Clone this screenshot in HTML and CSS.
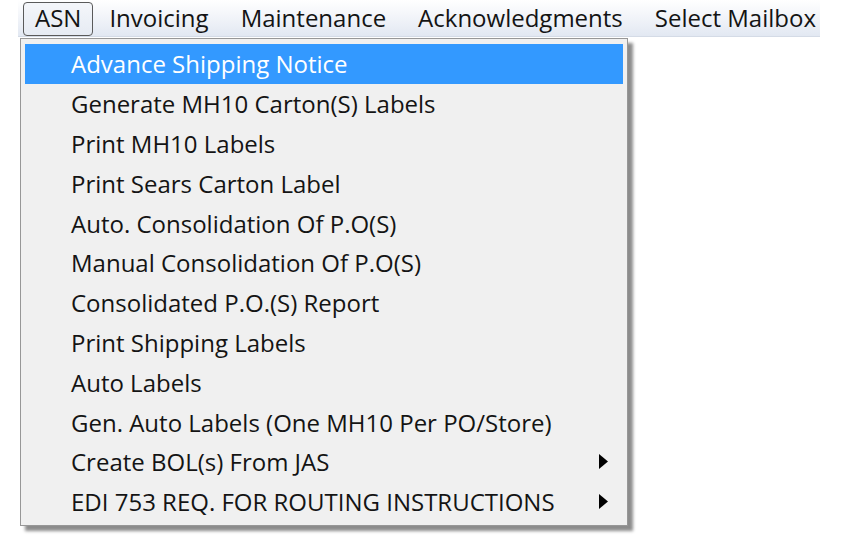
FILE: index.html
```html
<!DOCTYPE html>
<html>
<head>
<meta charset="utf-8">
<link rel="stylesheet" href="styles.css">
</head>
<body>
<div class="menubar">
  <div class="mb-item active">ASN</div>
  <div class="mb-item">Invoicing</div>
  <div class="mb-item">Maintenance</div>
  <div class="mb-item">Acknowledgments</div>
  <div class="mb-item">Select Mailbox</div>
</div>
<div class="menu">
  <div class="mi hl">Advance Shipping Notice</div>
  <div class="mi">Generate MH10 Carton(S) Labels</div>
  <div class="mi">Print MH10 Labels</div>
  <div class="mi">Print Sears Carton Label</div>
  <div class="mi">Auto. Consolidation Of P.O(S)</div>
  <div class="mi">Manual Consolidation Of P.O(S)</div>
  <div class="mi">Consolidated P.O.(S) Report</div>
  <div class="mi">Print Shipping Labels</div>
  <div class="mi">Auto Labels</div>
  <div class="mi">Gen. Auto Labels (One MH10 Per PO/Store)</div>
  <div class="mi sub"><span>Create BOL(s) From JAS</span><svg class="arrow" width="9" height="15" viewBox="0 0 9 15"><path d="M0 0 L9 7.5 L0 15 Z" fill="#000"/></svg></div>
  <div class="mi sub"><span>EDI 753 REQ. FOR ROUTING INSTRUCTIONS</span><svg class="arrow" width="9" height="15" viewBox="0 0 9 15"><path d="M0 0 L9 7.5 L0 15 Z" fill="#000"/></svg></div>
</div>
</body>
</html>
```
FILE: styles.css
```css
html, body {
  margin: 0;
  padding: 0;
  background: #ffffff;
}
body {
  font-family: "Open Sans", "Noto Sans", sans-serif;
  color: #141414;
  position: relative;
  width: 841px;
  height: 547px;
  overflow: hidden;
}
.menubar {
  margin-left: 18px;
  width: 802px;
  height: 37px;
  box-sizing: border-box;
  display: flex;
  align-items: stretch;
  padding-top: 2px;
  padding-left: 5px;
  background: linear-gradient(#ffffff 0%, #f4f6fa 40%, #e2e8f2 100%);
  border-bottom: 1px solid #d4dbe6;
  font-size: 24px;
}
.mb-item {
  display: flex;
  align-items: center;
  padding: 0 16px 3px 16px;
  box-sizing: border-box;
  white-space: nowrap;
}
.mb-item.active {
  border: 1px solid #5a5a5a;
  border-radius: 4px;
  padding: 0 11px 3px 11px;
  background: linear-gradient(#f4f6fa, #e6ebf3);
}
.menu {
  position: absolute;
  left: 20px;
  top: 38px;
  width: 608px;
  box-sizing: border-box;
  background: #f0f0f0;
  border: 1px solid #979797;
  padding: 5px 4px 3px 4px;
  box-shadow: 5px 5px 3px rgba(0, 0, 0, 0.45);
  font-size: 24px;
}
.mi {
  height: 39.8px;
  box-sizing: border-box;
  display: flex;
  align-items: center;
  padding-left: 46px;
  padding-right: 15px;
  white-space: nowrap;
}
.mi.hl {
  background: #3399ff;
  color: #ffffff;
}
.mi.sub {
  justify-content: space-between;
}
.arrow {
  display: block;
}
```
